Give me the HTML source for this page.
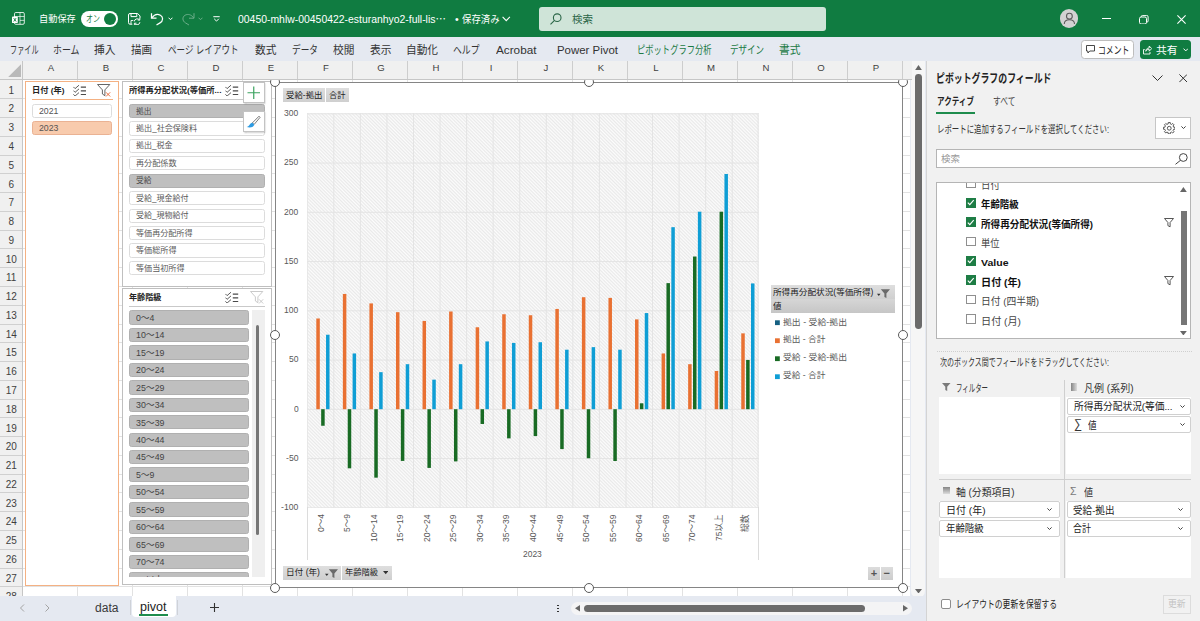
<!DOCTYPE html><html lang="ja"><head><meta charset="utf-8"><title>Excel</title><style>
*{box-sizing:border-box;margin:0;padding:0}
html,body{width:1200px;height:621px;overflow:hidden;background:#fff;font-family:"Liberation Sans", "Noto Sans CJK JP", sans-serif;font-size:12px;color:#222}
.a{position:absolute}
.t{position:absolute;white-space:nowrap;transform-origin:0 50%;display:block}
#title{position:absolute;left:0;top:0;width:1200px;height:38px;background:#107c41}
#tabs{position:absolute;left:0;top:37px;width:1200px;height:24px;background:#e5e9f1}
#colhdr{z-index:5;position:absolute;left:0;top:61px;width:912px;height:19px;background:#f0f0f0;border-bottom:1px solid #c6c6c6}
.cs{position:absolute;top:0;width:1px;height:18px;background:#cdcdcd}
#rowhdr{position:absolute;left:0;top:80px;width:23px;height:516px;background:#f0f0f0;border-right:1px solid #c6c6c6;overflow:hidden}
.rs{position:absolute;left:0;width:22px;height:1px;background:#d0d0d0}
#grid{position:absolute;left:23px;top:80px;width:889px;height:516px;overflow:hidden;background:#fff}
.vl{position:absolute;top:0;width:1px;height:516px;background:#e2e2e2}
.hl{position:absolute;left:0;height:1px;width:889px;background:#e2e2e2}
.slicer{position:absolute;background:#fff;border:1px solid #bfbfbf}
.si{position:absolute;border:1px solid #dcdcdc;border-radius:2.5px;background:#fff}
.si.sel{background:#bfbfbf;border-color:#b0b0b0}
.si.or{background:#f8cbad;border-color:#eab293}
#chart{position:absolute;left:274.5px;top:81.5px;width:628px;height:506.5px;background:#fff;border:1px solid #858585}
.hd{position:absolute;width:10px;height:10px;border:1.9px solid #5a5a5a;border-radius:50%;background:#fff}
.fb{position:absolute;background:linear-gradient(#dedede,#cfcfcf)}
.bar{position:absolute;width:3.5px}
#plot{position:absolute;left:307px;top:113px;width:451.5px;height:394.5px;background-color:#f3f3f3;background-image:repeating-linear-gradient(45deg,#fcfcfc 0,#e9e9e9 1.2px,#fcfcfc 2.4px);overflow:hidden}
.pg{position:absolute;background:#e2e2e2}
#panel{position:absolute;left:926px;top:61px;width:274px;height:560px;background:#f1f1f1;border-left:1px solid #d4d4d4}
.box{position:absolute;background:#fff}
.fld{position:absolute;height:17px;background:#fff;border:1px solid #d0d0d0;border-radius:2px}
.cb{position:absolute;width:9.5px;height:9.5px;border:1px solid #8f8f8f;background:#fff}
.cb.on{background:#1e7d45;border-color:#1e7d45}
#bottom{position:absolute;left:0;top:595.5px;width:926px;height:26px;background:#e5e9f1}
</style></head><body>
<div id="title"></div>
<svg class="a" style="left:12px;top:12px;" width="13.5" height="13.5" viewBox="0 0 13.5 13.5"><path d="M3.8 0.5h7.2a1.3 1.3 0 0 1 1.3 1.3v9.2a1.3 1.3 0 0 1-1.3 1.3h-7.2a1.3 1.3 0 0 1-1.3-1.3v-9.2a1.3 1.3 0 0 1 1.3-1.3z" fill="none" stroke="#fff" stroke-width="0.9" opacity=".92"/><path d="M8 0.5v11.8M2.5 4.5h9.8M8 8.4h4.3" stroke="#fff" stroke-width="0.8" fill="none" opacity=".85"/><rect x="0" y="4.5" width="5.8" height="6.6" rx="0.9" fill="#fff"/><path d="M1.7 6.1l2.4 3.4M4.1 6.1l-2.4 3.4" stroke="#107c41" stroke-width="0.9"/></svg>
<span class="t" style="left:38.5px;top:12.2px;font-size:9.5px;line-height:14px;color:#fff;transform:scaleX(0.968);">自動保存</span>
<div class="a" style="left:81px;top:10.5px;width:37px;height:16.5px;border-radius:8.5px;background:#fff"></div>
<span class="t" style="left:86.3px;top:11.9px;font-size:9.3px;line-height:14px;color:#107c41;transform:scaleX(0.752);">オン</span>
<div class="a" style="left:104px;top:13px;width:12px;height:12px;border-radius:50%;background:#107c41"></div>
<svg class="a" style="left:128px;top:12.5px;" width="13" height="12.5" viewBox="0 0 13 12.5"><path d="M4.3 11.2h-2.3a1.5 1.5 0 0 1-1.5-1.5v-7.7a1.5 1.5 0 0 1 1.5-1.5h7.6l2.4 2.4v2.3" fill="none" stroke="#fff" stroke-width="1"/><path d="M3 0.5v3.1h5.8v-3.1" fill="none" stroke="#fff" stroke-width="1"/><path d="M3 11.2v-3.7h2.3" fill="none" stroke="#fff" stroke-width="0.9"/><path d="M6.3 8.4a2.9 2.7 0 0 1 5.2-1.5M11.9 9.2a2.9 2.7 0 0 1-5.2 1.5" fill="none" stroke="#fff" stroke-width="1"/><path d="M11.8 5v2.1h-2.1M6.4 12.3v-2.1h2.1" fill="none" stroke="#fff" stroke-width="0.9"/></svg>
<svg class="a" style="left:150px;top:11.5px;" width="14.5" height="14.5" viewBox="0 0 14.5 14.5"><path d="M1.5 1.2v5h5" fill="none" stroke="#fff" stroke-width="1.25" stroke-linejoin="miter"/><path d="M1.8 5.9c2.3-3.3 5.8-4.3 8.6-2.7 3 1.7 2.9 5.8-.4 7.7l-3.5 2.1" fill="none" stroke="#fff" stroke-width="1.25"/></svg>
<svg class="a" style="left:168px;top:16.5px;" width="5" height="4" viewBox="0 0 5 4"><path d="M0.5 0.7l2 2 2-2" fill="none" stroke="#fff" stroke-width="1"/></svg>
<svg class="a" style="left:180.5px;top:11.5px;opacity:.38" width="14.5" height="14.5" viewBox="0 0 14.5 14.5"><g transform="translate(14.5 0) scale(-1 1)"><path d="M1.5 1.2v5h5" fill="none" stroke="#fff" stroke-width="1" stroke-linejoin="miter"/><path d="M1.8 5.9c2.3-3.3 5.8-4.3 8.6-2.7 3 1.7 2.9 5.8-.4 7.7l-3.5 2.1" fill="none" stroke="#fff" stroke-width="1"/></g></svg>
<svg class="a" style="left:198px;top:16.5px;opacity:.38" width="5" height="4" viewBox="0 0 5 4"><path d="M0.5 0.7l2 2 2-2" fill="none" stroke="#fff" stroke-width="1"/></svg>
<svg class="a" style="left:212.5px;top:15.5px;" width="7" height="6" viewBox="0 0 7 6"><path d="M0.3 0.7h6.4M1.2 2.8l2.3 2.3 2.3-2.3" fill="none" stroke="#fff" stroke-width="1"/></svg>
<span class="t" style="left:238px;top:11px;font-size:11px;line-height:16px;color:#fff;transform:scaleX(0.947);">00450-mhlw-00450422-esturanhyo2-full-lis⋯</span>
<span class="t" style="left:455px;top:11px;font-size:10.5px;line-height:16px;color:#fff;">•</span>
<span class="t" style="left:462px;top:11.5px;font-size:10px;line-height:15px;color:#fff;transform:scaleX(0.938);">保存済み</span>
<svg class="a" style="left:502px;top:16px;" width="8.5" height="6" viewBox="0 0 8.5 6"><path d="M0.6 0.8l3.65 3.8 3.65-3.8" fill="none" stroke="#fff" stroke-width="1.1"/></svg>
<div class="a" style="left:539px;top:7px;width:287px;height:23.5px;background:#cfe4d8;border-radius:3px"></div>
<svg class="a" style="left:549.5px;top:12.5px;" width="12" height="12" viewBox="0 0 12 12"><circle cx="7.2" cy="4.7" r="3.8" fill="none" stroke="#2a6546" stroke-width="1.1"/><path d="M4.5 7.4l-4 4" stroke="#2a6546" stroke-width="1.1"/></svg>
<span class="t" style="left:572px;top:11px;font-size:10.5px;line-height:16px;color:#2a6546;transform:scaleX(1);">検索</span>
<div class="a" style="left:1059.5px;top:9.3px;width:18.8px;height:18.8px;border-radius:50%;background:#d2d2d2"></div>
<svg class="a" style="left:1059.5px;top:9.3px;" width="18.8" height="18.8" viewBox="0 0 18.8 18.8"><circle cx="9.4" cy="7.2" r="2.9" fill="none" stroke="#5c5c5c" stroke-width="1.1"/><path d="M4.3 15c0-3.2 2.3-4.3 5.1-4.3s5.1 1.1 5.1 4.3" fill="none" stroke="#5c5c5c" stroke-width="1.1"/></svg>
<div class="a" style="left:1102px;top:18px;width:8.5px;height:1px;background:#fff"></div>
<svg class="a" style="left:1139px;top:14.5px;" width="9.5" height="9.5" viewBox="0 0 9.5 9.5"><rect x="0.5" y="2" width="7" height="7" rx="1.6" fill="none" stroke="#fff" stroke-width="1"/><path d="M2.3 2v-0.3a1.3 1.3 0 0 1 1.3-1.3h4a1.5 1.5 0 0 1 1.5 1.5v4a1.3 1.3 0 0 1-1.3 1.3h-0.3" fill="none" stroke="#fff" stroke-width="1"/></svg>
<svg class="a" style="left:1177px;top:14.7px;" width="9" height="9" viewBox="0 0 9 9"><path d="M0.4 0.4l8.2 8.2M8.6 0.4l-8.2 8.2" stroke="#fff" stroke-width="1.1"/></svg>
<div id="tabs"></div>
<span class="t" style="left:9.5px;top:41.8px;font-size:11px;line-height:16px;color:#333;transform:scaleX(0.648);">ファイル</span>
<span class="t" style="left:53px;top:41.8px;font-size:11px;line-height:16px;color:#333;transform:scaleX(0.811);">ホーム</span>
<span class="t" style="left:94px;top:41.8px;font-size:11px;line-height:16px;color:#333;transform:scaleX(0.977);">挿入</span>
<span class="t" style="left:131px;top:41.8px;font-size:11px;line-height:16px;color:#333;transform:scaleX(0.955);">描画</span>
<span class="t" style="left:168px;top:41.8px;font-size:11px;line-height:16px;color:#333;transform:scaleX(0.776);">ページ レイアウト</span>
<span class="t" style="left:255px;top:41.8px;font-size:11px;line-height:16px;color:#333;transform:scaleX(0.977);">数式</span>
<span class="t" style="left:292px;top:41.8px;font-size:11px;line-height:16px;color:#333;transform:scaleX(0.788);">データ</span>
<span class="t" style="left:333px;top:41.8px;font-size:11px;line-height:16px;color:#333;transform:scaleX(0.977);">校閲</span>
<span class="t" style="left:369.5px;top:41.8px;font-size:11px;line-height:16px;color:#333;transform:scaleX(0.977);">表示</span>
<span class="t" style="left:406px;top:41.8px;font-size:11px;line-height:16px;color:#333;transform:scaleX(0.97);">自動化</span>
<span class="t" style="left:453px;top:41.8px;font-size:11px;line-height:16px;color:#333;transform:scaleX(0.803);">ヘルプ</span>
<span class="t" style="left:496px;top:41.8px;font-size:11px;line-height:16px;color:#333;transform:scaleX(1.068);">Acrobat</span>
<span class="t" style="left:557px;top:41.8px;font-size:11px;line-height:16px;color:#333;transform:scaleX(1.039);">Power Pivot</span>
<span class="t" style="left:637px;top:41.8px;font-size:11px;line-height:16px;color:#1a7a43;transform:scaleX(0.753);">ピボットグラフ分析</span>
<span class="t" style="left:729.5px;top:41.8px;font-size:11px;line-height:16px;color:#1a7a43;transform:scaleX(0.773);">デザイン</span>
<span class="t" style="left:779px;top:41.8px;font-size:11px;line-height:16px;color:#1a7a43;transform:scaleX(0.977);">書式</span>
<div class="a" style="left:1081px;top:40px;width:53px;height:19px;border:1px solid #bdbdbd;border-radius:3.5px;background:#fff"></div>
<svg class="a" style="left:1085.5px;top:45.3px;" width="9" height="9" viewBox="0 0 9 9"><path d="M0.5 0.5h8v5.5h-4.7l-1.9 2v-2h-1.4z" fill="none" stroke="#333" stroke-width="0.9"/></svg>
<span class="t" style="left:1097.5px;top:41.8px;font-size:10.5px;line-height:16px;color:#222;transform:scaleX(0.75);">コメント</span>
<div class="a" style="left:1140px;top:40px;width:51px;height:19px;border-radius:3.5px;background:#107c41"></div>
<svg class="a" style="left:1143px;top:45px;" width="9" height="9.5" viewBox="0 0 9 9.5"><path d="M1.7 4.5h-1.2v4.5h6.5v-2" fill="none" stroke="#fff" stroke-width="0.9"/><path d="M2.8 6.3c0-2 1.3-3.3 3.4-3.3v-2l2.5 2.6-2.5 2.6v-1.9c-1.7 0-2.7.5-3.4 2z" fill="none" stroke="#fff" stroke-width="0.9" stroke-linejoin="round"/></svg>
<span class="t" style="left:1156px;top:41.8px;font-size:10.5px;line-height:16px;color:#fff;transform:scaleX(1.024);">共有</span>
<svg class="a" style="left:1182.5px;top:48.3px;" width="5.5" height="4" viewBox="0 0 5.5 4"><path d="M0.5 0.6l2.25 2.3 2.25-2.3" fill="none" stroke="#fff" stroke-width="1"/></svg>
<div id="grid">
<div class="vl" style="left:54px"></div>
<div class="vl" style="left:109px"></div>
<div class="vl" style="left:164px"></div>
<div class="vl" style="left:219px"></div>
<div class="vl" style="left:274px"></div>
<div class="vl" style="left:329px"></div>
<div class="vl" style="left:384px"></div>
<div class="vl" style="left:439px"></div>
<div class="vl" style="left:494px"></div>
<div class="vl" style="left:549px"></div>
<div class="vl" style="left:604px"></div>
<div class="vl" style="left:659px"></div>
<div class="vl" style="left:714px"></div>
<div class="vl" style="left:769px"></div>
<div class="vl" style="left:824px"></div>
<div class="vl" style="left:879px"></div>
<div class="hl" style="top:18.27px"></div>
<div class="hl" style="top:37.04px"></div>
<div class="hl" style="top:55.81px"></div>
<div class="hl" style="top:74.58px"></div>
<div class="hl" style="top:93.35px"></div>
<div class="hl" style="top:112.12px"></div>
<div class="hl" style="top:130.89px"></div>
<div class="hl" style="top:149.66px"></div>
<div class="hl" style="top:168.43px"></div>
<div class="hl" style="top:187.2px"></div>
<div class="hl" style="top:205.97px"></div>
<div class="hl" style="top:224.74px"></div>
<div class="hl" style="top:243.51px"></div>
<div class="hl" style="top:262.28px"></div>
<div class="hl" style="top:281.05px"></div>
<div class="hl" style="top:299.82px"></div>
<div class="hl" style="top:318.59px"></div>
<div class="hl" style="top:337.36px"></div>
<div class="hl" style="top:356.13px"></div>
<div class="hl" style="top:374.9px"></div>
<div class="hl" style="top:393.67px"></div>
<div class="hl" style="top:412.44px"></div>
<div class="hl" style="top:431.21px"></div>
<div class="hl" style="top:449.98px"></div>
<div class="hl" style="top:468.75px"></div>
<div class="hl" style="top:487.52px"></div>
<div class="hl" style="top:506.29px"></div>
</div>
<div id="colhdr">
<div class="cs" style="left:22px;height:19px;background:#c6c6c6"></div>
<div class="cs" style="left:77px"></div>
<div class="cs" style="left:132px"></div>
<div class="cs" style="left:187px"></div>
<div class="cs" style="left:242px"></div>
<div class="cs" style="left:297px"></div>
<div class="cs" style="left:352px"></div>
<div class="cs" style="left:407px"></div>
<div class="cs" style="left:462px"></div>
<div class="cs" style="left:517px"></div>
<div class="cs" style="left:572px"></div>
<div class="cs" style="left:627px"></div>
<div class="cs" style="left:682px"></div>
<div class="cs" style="left:737px"></div>
<div class="cs" style="left:792px"></div>
<div class="cs" style="left:847px"></div>
<div class="cs" style="left:902px"></div>
</div>
<svg class="a" style="left:7.5px;top:64.3px;z-index:6" width="13.2" height="13.2" viewBox="0 0 13.2 13.2"><path d="M13.2 0v13.2h-13.2z" fill="#b9b9b9"/></svg>
<span class="t" style="z-index:6;left:23.5px;top:61.3px;width:55px;text-align:center;font-size:9.6px;line-height:14px;color:#3f3f3f">A</span>
<span class="t" style="z-index:6;left:78.5px;top:61.3px;width:55px;text-align:center;font-size:9.6px;line-height:14px;color:#3f3f3f">B</span>
<span class="t" style="z-index:6;left:133.5px;top:61.3px;width:55px;text-align:center;font-size:9.6px;line-height:14px;color:#3f3f3f">C</span>
<span class="t" style="z-index:6;left:188.5px;top:61.3px;width:55px;text-align:center;font-size:9.6px;line-height:14px;color:#3f3f3f">D</span>
<span class="t" style="z-index:6;left:243.5px;top:61.3px;width:55px;text-align:center;font-size:9.6px;line-height:14px;color:#3f3f3f">E</span>
<span class="t" style="z-index:6;left:298.5px;top:61.3px;width:55px;text-align:center;font-size:9.6px;line-height:14px;color:#3f3f3f">F</span>
<span class="t" style="z-index:6;left:353.5px;top:61.3px;width:55px;text-align:center;font-size:9.6px;line-height:14px;color:#3f3f3f">G</span>
<span class="t" style="z-index:6;left:408.5px;top:61.3px;width:55px;text-align:center;font-size:9.6px;line-height:14px;color:#3f3f3f">H</span>
<span class="t" style="z-index:6;left:463.5px;top:61.3px;width:55px;text-align:center;font-size:9.6px;line-height:14px;color:#3f3f3f">I</span>
<span class="t" style="z-index:6;left:518.5px;top:61.3px;width:55px;text-align:center;font-size:9.6px;line-height:14px;color:#3f3f3f">J</span>
<span class="t" style="z-index:6;left:573.5px;top:61.3px;width:55px;text-align:center;font-size:9.6px;line-height:14px;color:#3f3f3f">K</span>
<span class="t" style="z-index:6;left:628.5px;top:61.3px;width:55px;text-align:center;font-size:9.6px;line-height:14px;color:#3f3f3f">L</span>
<span class="t" style="z-index:6;left:683.5px;top:61.3px;width:55px;text-align:center;font-size:9.6px;line-height:14px;color:#3f3f3f">M</span>
<span class="t" style="z-index:6;left:738.5px;top:61.3px;width:55px;text-align:center;font-size:9.6px;line-height:14px;color:#3f3f3f">N</span>
<span class="t" style="z-index:6;left:793.5px;top:61.3px;width:55px;text-align:center;font-size:9.6px;line-height:14px;color:#3f3f3f">O</span>
<span class="t" style="z-index:6;left:848.5px;top:61.3px;width:55px;text-align:center;font-size:9.6px;line-height:14px;color:#3f3f3f">P</span>
<div id="rowhdr">
<div class="rs" style="top:18.27px"></div>
<div class="rs" style="top:37.04px"></div>
<div class="rs" style="top:55.81px"></div>
<div class="rs" style="top:74.58px"></div>
<div class="rs" style="top:93.35px"></div>
<div class="rs" style="top:112.12px"></div>
<div class="rs" style="top:130.89px"></div>
<div class="rs" style="top:149.66px"></div>
<div class="rs" style="top:168.43px"></div>
<div class="rs" style="top:187.2px"></div>
<div class="rs" style="top:205.97px"></div>
<div class="rs" style="top:224.74px"></div>
<div class="rs" style="top:243.51px"></div>
<div class="rs" style="top:262.28px"></div>
<div class="rs" style="top:281.05px"></div>
<div class="rs" style="top:299.82px"></div>
<div class="rs" style="top:318.59px"></div>
<div class="rs" style="top:337.36px"></div>
<div class="rs" style="top:356.13px"></div>
<div class="rs" style="top:374.9px"></div>
<div class="rs" style="top:393.67px"></div>
<div class="rs" style="top:412.44px"></div>
<div class="rs" style="top:431.21px"></div>
<div class="rs" style="top:449.98px"></div>
<div class="rs" style="top:468.75px"></div>
<div class="rs" style="top:487.52px"></div>
<div class="rs" style="top:506.29px"></div>
<div class="rs" style="top:525.06px"></div>
<span class="t" style="left:0;top:3.7px;width:22.5px;text-align:center;font-size:10px;line-height:14px;color:#3f3f3f">1</span>
<span class="t" style="left:0;top:22.47px;width:22.5px;text-align:center;font-size:10px;line-height:14px;color:#3f3f3f">2</span>
<span class="t" style="left:0;top:41.24px;width:22.5px;text-align:center;font-size:10px;line-height:14px;color:#3f3f3f">3</span>
<span class="t" style="left:0;top:60.01px;width:22.5px;text-align:center;font-size:10px;line-height:14px;color:#3f3f3f">4</span>
<span class="t" style="left:0;top:78.78px;width:22.5px;text-align:center;font-size:10px;line-height:14px;color:#3f3f3f">5</span>
<span class="t" style="left:0;top:97.55px;width:22.5px;text-align:center;font-size:10px;line-height:14px;color:#3f3f3f">6</span>
<span class="t" style="left:0;top:116.32px;width:22.5px;text-align:center;font-size:10px;line-height:14px;color:#3f3f3f">7</span>
<span class="t" style="left:0;top:135.09px;width:22.5px;text-align:center;font-size:10px;line-height:14px;color:#3f3f3f">8</span>
<span class="t" style="left:0;top:153.86px;width:22.5px;text-align:center;font-size:10px;line-height:14px;color:#3f3f3f">9</span>
<span class="t" style="left:0;top:172.63px;width:22.5px;text-align:center;font-size:10px;line-height:14px;color:#3f3f3f">10</span>
<span class="t" style="left:0;top:191.4px;width:22.5px;text-align:center;font-size:10px;line-height:14px;color:#3f3f3f">11</span>
<span class="t" style="left:0;top:210.17px;width:22.5px;text-align:center;font-size:10px;line-height:14px;color:#3f3f3f">12</span>
<span class="t" style="left:0;top:228.94px;width:22.5px;text-align:center;font-size:10px;line-height:14px;color:#3f3f3f">13</span>
<span class="t" style="left:0;top:247.71px;width:22.5px;text-align:center;font-size:10px;line-height:14px;color:#3f3f3f">14</span>
<span class="t" style="left:0;top:266.48px;width:22.5px;text-align:center;font-size:10px;line-height:14px;color:#3f3f3f">15</span>
<span class="t" style="left:0;top:285.25px;width:22.5px;text-align:center;font-size:10px;line-height:14px;color:#3f3f3f">16</span>
<span class="t" style="left:0;top:304.02px;width:22.5px;text-align:center;font-size:10px;line-height:14px;color:#3f3f3f">17</span>
<span class="t" style="left:0;top:322.79px;width:22.5px;text-align:center;font-size:10px;line-height:14px;color:#3f3f3f">18</span>
<span class="t" style="left:0;top:341.56px;width:22.5px;text-align:center;font-size:10px;line-height:14px;color:#3f3f3f">19</span>
<span class="t" style="left:0;top:360.33px;width:22.5px;text-align:center;font-size:10px;line-height:14px;color:#3f3f3f">20</span>
<span class="t" style="left:0;top:379.1px;width:22.5px;text-align:center;font-size:10px;line-height:14px;color:#3f3f3f">21</span>
<span class="t" style="left:0;top:397.87px;width:22.5px;text-align:center;font-size:10px;line-height:14px;color:#3f3f3f">22</span>
<span class="t" style="left:0;top:416.64px;width:22.5px;text-align:center;font-size:10px;line-height:14px;color:#3f3f3f">23</span>
<span class="t" style="left:0;top:435.41px;width:22.5px;text-align:center;font-size:10px;line-height:14px;color:#3f3f3f">24</span>
<span class="t" style="left:0;top:454.18px;width:22.5px;text-align:center;font-size:10px;line-height:14px;color:#3f3f3f">25</span>
<span class="t" style="left:0;top:472.95px;width:22.5px;text-align:center;font-size:10px;line-height:14px;color:#3f3f3f">26</span>
<span class="t" style="left:0;top:491.72px;width:22.5px;text-align:center;font-size:10px;line-height:14px;color:#3f3f3f">27</span>
<span class="t" style="left:0;top:510.49px;width:22.5px;text-align:center;font-size:10px;line-height:14px;color:#3f3f3f">28</span>
</div>
<div class="slicer" style="left:24.5px;top:80.7px;width:94.5px;height:505.3px;border-color:#f4b183"></div>
<span class="t" style="left:32.4px;top:85.2px;font-size:8px;line-height:12px;color:#222;font-weight:bold;transform:scaleX(1.03);">日付 (年)</span>
<svg class="a" style="left:72.7px;top:84.6px;" width="13.5" height="11.5" viewBox="0 0 13.5 11.5"><path d="M7.8 2.1h5.4M7.8 5.8h5.4M7.8 9.5h5.4" stroke="#4a4a4a" stroke-width="1.2"/><path d="M0.4 1.9l1.7 1.7 3.9-3.4M0.4 5.6l1.7 1.7 3.9-3.4M0.4 9.3l1.7 1.7 3.9-3.4" fill="none" stroke="#4a4a4a" stroke-width="0.9"/></svg>
<svg class="a" style="left:97.2px;top:84px;" width="13.5" height="13" viewBox="0 0 13.5 13"><path d="M0.5 0.5h12.3l-4.9 5.4v5.8l-2.5-1.7v-4.1z" fill="none" stroke="#555" stroke-width="0.9" stroke-linejoin="round"/><path d="M9 8.3l4.2 4.2M13.2 8.3l-4.2 4.2" stroke="#e8602c" stroke-width="0.9"/></svg>
<div class="a" style="left:32px;top:98.5px;width:80.5px;height:1px;background:#f4b183"></div>
<div class="si" style="left:32.2px;top:103.5px;width:80.3px;height:14.3px"></div>
<span class="t" style="left:39px;top:103.7px;font-size:9px;line-height:14px;color:#555;transform:scaleX(0.973);">2021</span>
<div class="si or" style="left:32.2px;top:121px;width:80.3px;height:14.3px"></div>
<span class="t" style="left:39px;top:121.2px;font-size:9px;line-height:14px;color:#555;transform:scaleX(0.973);">2023</span>
<div class="slicer" style="left:121.5px;top:80.7px;width:150.5px;height:206px"></div>
<span class="t" style="left:129px;top:85.2px;font-size:8px;line-height:12px;color:#222;font-weight:bold;transform:scaleX(1.035);">所得再分配状況(等価所...</span>
<svg class="a" style="left:225.2px;top:84.6px;" width="13.5" height="11.5" viewBox="0 0 13.5 11.5"><path d="M7.8 2.1h5.4M7.8 5.8h5.4M7.8 9.5h5.4" stroke="#4a4a4a" stroke-width="1.2"/><path d="M0.4 1.9l1.7 1.7 3.9-3.4M0.4 5.6l1.7 1.7 3.9-3.4M0.4 9.3l1.7 1.7 3.9-3.4" fill="none" stroke="#4a4a4a" stroke-width="0.9"/></svg>
<div class="a" style="left:129px;top:98.5px;width:136px;height:1px;background:#c9c9c9"></div>
<div class="si sel" style="left:129px;top:103.8px;width:136px;height:14.3px"></div>
<span class="t" style="left:136px;top:105.5px;font-size:8.2px;line-height:12px;color:#4a4a4a;transform:scaleX(0.946);">拠出</span>
<div class="si" style="left:129px;top:121.25px;width:136px;height:14.3px"></div>
<span class="t" style="left:136px;top:122.95px;font-size:8.2px;line-height:12px;color:#5a5a5a;transform:scaleX(0.986);">拠出_社会保険料</span>
<div class="si" style="left:129px;top:138.7px;width:136px;height:14.3px"></div>
<span class="t" style="left:136px;top:140.4px;font-size:8.2px;line-height:12px;color:#5a5a5a;transform:scaleX(0.978);">拠出_税金</span>
<div class="si" style="left:129px;top:156.15px;width:136px;height:14.3px"></div>
<span class="t" style="left:136px;top:157.85px;font-size:8.2px;line-height:12px;color:#5a5a5a;transform:scaleX(0.989);">再分配係数</span>
<div class="si sel" style="left:129px;top:173.6px;width:136px;height:14.3px"></div>
<span class="t" style="left:136px;top:175.3px;font-size:8.2px;line-height:12px;color:#4a4a4a;transform:scaleX(0.946);">受給</span>
<div class="si" style="left:129px;top:191.05px;width:136px;height:14.3px"></div>
<span class="t" style="left:136px;top:192.75px;font-size:8.2px;line-height:12px;color:#5a5a5a;transform:scaleX(0.978);">受給_現金給付</span>
<div class="si" style="left:129px;top:208.5px;width:136px;height:14.3px"></div>
<span class="t" style="left:136px;top:210.2px;font-size:8.2px;line-height:12px;color:#5a5a5a;transform:scaleX(0.978);">受給_現物給付</span>
<div class="si" style="left:129px;top:225.95px;width:136px;height:14.3px"></div>
<span class="t" style="left:136px;top:227.65px;font-size:8.2px;line-height:12px;color:#5a5a5a;transform:scaleX(0.986);">等価再分配所得</span>
<div class="si" style="left:129px;top:243.4px;width:136px;height:14.3px"></div>
<span class="t" style="left:136px;top:245.1px;font-size:8.2px;line-height:12px;color:#5a5a5a;transform:scaleX(0.989);">等価総所得</span>
<div class="si" style="left:129px;top:260.85px;width:136px;height:14.3px"></div>
<span class="t" style="left:136px;top:262.55px;font-size:8.2px;line-height:12px;color:#5a5a5a;transform:scaleX(0.987);">等価当初所得</span>
<div class="slicer" style="left:121.5px;top:288px;width:150.5px;height:296.5px;overflow:hidden">
</div>
<span class="t" style="left:129px;top:291.9px;font-size:8px;line-height:12px;color:#222;font-weight:bold;transform:scaleX(1.009);">年齢階級</span>
<svg class="a" style="left:225.2px;top:291.6px;" width="13.5" height="11.5" viewBox="0 0 13.5 11.5"><path d="M7.8 2.1h5.4M7.8 5.8h5.4M7.8 9.5h5.4" stroke="#4a4a4a" stroke-width="1.2"/><path d="M0.4 1.9l1.7 1.7 3.9-3.4M0.4 5.6l1.7 1.7 3.9-3.4M0.4 9.3l1.7 1.7 3.9-3.4" fill="none" stroke="#4a4a4a" stroke-width="0.9"/></svg>
<svg class="a" style="left:250px;top:291px;" width="13.5" height="13" viewBox="0 0 13.5 13"><path d="M0.5 0.5h12.3l-4.9 5.4v5.8l-2.5-1.7v-4.1z" fill="none" stroke="#c4c4c4" stroke-width="0.9" stroke-linejoin="round"/><path d="M9 8.3l4.2 4.2M13.2 8.3l-4.2 4.2" stroke="#c4c4c4" stroke-width="0.9"/></svg>
<div class="a" style="left:129px;top:306px;width:136px;height:1px;background:#c9c9c9"></div>
<div class="a" style="left:251.5px;top:310px;width:13px;height:267px;background:#efefef"></div>
<div class="a" style="left:255.5px;top:325px;width:3.2px;height:209.5px;background:#767676;border-radius:1.5px"></div>
<div class="a" style="left:128px;top:309px;width:122px;height:268.2px;overflow:hidden">
<div class="si sel" style="left:1px;top:1.4px;width:119.5px;height:14.4px"></div>
<div class="si sel" style="left:1px;top:18.85px;width:119.5px;height:14.4px"></div>
<div class="si sel" style="left:1px;top:36.3px;width:119.5px;height:14.4px"></div>
<div class="si sel" style="left:1px;top:53.75px;width:119.5px;height:14.4px"></div>
<div class="si sel" style="left:1px;top:71.2px;width:119.5px;height:14.4px"></div>
<div class="si sel" style="left:1px;top:88.65px;width:119.5px;height:14.4px"></div>
<div class="si sel" style="left:1px;top:106.1px;width:119.5px;height:14.4px"></div>
<div class="si sel" style="left:1px;top:123.55px;width:119.5px;height:14.4px"></div>
<div class="si sel" style="left:1px;top:141px;width:119.5px;height:14.4px"></div>
<div class="si sel" style="left:1px;top:158.45px;width:119.5px;height:14.4px"></div>
<div class="si sel" style="left:1px;top:175.9px;width:119.5px;height:14.4px"></div>
<div class="si sel" style="left:1px;top:193.35px;width:119.5px;height:14.4px"></div>
<div class="si sel" style="left:1px;top:210.8px;width:119.5px;height:14.4px"></div>
<div class="si sel" style="left:1px;top:228.25px;width:119.5px;height:14.4px"></div>
<div class="si sel" style="left:1px;top:245.7px;width:119.5px;height:14.4px"></div>
<div class="si sel" style="left:1px;top:263.15px;width:119.5px;height:14.4px"></div>
</div>
<span class="t" style="left:136px;top:311.8px;font-size:8.8px;line-height:13px;color:#444;transform:scaleX(0.995);">0～4</span>
<span class="t" style="left:136px;top:329.25px;font-size:8.8px;line-height:13px;color:#444;transform:scaleX(1.004);">10～14</span>
<span class="t" style="left:136px;top:346.7px;font-size:8.8px;line-height:13px;color:#444;transform:scaleX(1.004);">15～19</span>
<span class="t" style="left:136px;top:364.15px;font-size:8.8px;line-height:13px;color:#444;transform:scaleX(1.004);">20～24</span>
<span class="t" style="left:136px;top:381.6px;font-size:8.8px;line-height:13px;color:#444;transform:scaleX(1.004);">25～29</span>
<span class="t" style="left:136px;top:399.05px;font-size:8.8px;line-height:13px;color:#444;transform:scaleX(1.004);">30～34</span>
<span class="t" style="left:136px;top:416.5px;font-size:8.8px;line-height:13px;color:#444;transform:scaleX(1.004);">35～39</span>
<span class="t" style="left:136px;top:433.95px;font-size:8.8px;line-height:13px;color:#444;transform:scaleX(1.004);">40～44</span>
<span class="t" style="left:136px;top:451.4px;font-size:8.8px;line-height:13px;color:#444;transform:scaleX(1.004);">45～49</span>
<span class="t" style="left:136px;top:468.85px;font-size:8.8px;line-height:13px;color:#444;transform:scaleX(0.995);">5～9</span>
<span class="t" style="left:136px;top:486.3px;font-size:8.8px;line-height:13px;color:#444;transform:scaleX(1.004);">50～54</span>
<span class="t" style="left:136px;top:503.75px;font-size:8.8px;line-height:13px;color:#444;transform:scaleX(1.004);">55～59</span>
<span class="t" style="left:136px;top:521.2px;font-size:8.8px;line-height:13px;color:#444;transform:scaleX(1.004);">60～64</span>
<span class="t" style="left:136px;top:538.65px;font-size:8.8px;line-height:13px;color:#444;transform:scaleX(1.004);">65～69</span>
<span class="t" style="left:136px;top:556.1px;font-size:8.8px;line-height:13px;color:#444;transform:scaleX(1.004);">70～74</span>
<div class="a" style="left:128px;top:570px;width:122px;height:7.2px;overflow:hidden">
<span class="t" style="left:8px;top:3.5px;font-size:8.8px;line-height:13px;color:#444">75以上</span>
</div>
<div class="a" style="left:243px;top:82px;width:21.5px;height:21px;border:1px solid #c3c3c3;background:#fff;box-shadow:0.5px 1px 1.5px rgba(0,0,0,.22)"></div>
<div class="a" style="left:243px;top:111px;width:21.5px;height:21px;border:1px solid #c3c3c3;background:#fff;box-shadow:0.5px 1px 1.5px rgba(0,0,0,.22)"></div>
<svg class="a" style="left:247px;top:85.7px;" width="13.5" height="13.5" viewBox="0 0 13.5 13.5"><path d="M6.75 0.5v12.5M0.5 6.75h12.5" stroke="#3ba35f" stroke-width="1.2"/></svg>
<svg class="a" style="left:245.5px;top:115px;" width="15" height="14" viewBox="0 0 15 14"><path d="M13 1.2l1.1 1.1-6 7.2-1.7-1.6z" fill="#fff" stroke="#6b6b6b" stroke-width="0.9" stroke-linejoin="round"/><path d="M6.3 7.7l1.9 1.8c-.3 2.4-3.5 3.9-7.6 2.6 2.7-.6 3-3.9 5.7-4.4z" fill="#2e9be2"/></svg>
<div id="chart"></div>
<div id="plot">
</div>
<span class="t" style="left:284.1px;top:107px;font-size:8.6px;line-height:13px;color:#595959;transform:scaleX(0.99);">300</span>
<span class="t" style="left:284.1px;top:156.25px;font-size:8.6px;line-height:13px;color:#595959;transform:scaleX(0.99);">250</span>
<span class="t" style="left:284.1px;top:205.5px;font-size:8.6px;line-height:13px;color:#595959;transform:scaleX(0.99);">200</span>
<span class="t" style="left:284.1px;top:254.75px;font-size:8.6px;line-height:13px;color:#595959;transform:scaleX(0.99);">150</span>
<span class="t" style="left:284.1px;top:304px;font-size:8.6px;line-height:13px;color:#595959;transform:scaleX(0.99);">100</span>
<span class="t" style="left:288.8px;top:353.25px;font-size:8.6px;line-height:13px;color:#595959;transform:scaleX(0.993);">50</span>
<span class="t" style="left:293.6px;top:402.5px;font-size:8.6px;line-height:13px;color:#595959;transform:scaleX(0.983);">0</span>
<span class="t" style="left:285.8px;top:451.75px;font-size:8.6px;line-height:13px;color:#595959;transform:scaleX(1.006);">-50</span>
<span class="t" style="left:281px;top:501px;font-size:8.6px;line-height:13px;color:#595959;transform:scaleX(1.006);">-100</span>
<svg class="a" style="left:307px;top:113px;" width="452" height="395" viewBox="0 0 452 395"><rect x="0" y="0.3" width="451.5" height="1" fill="#e4e4e4"/><rect x="0" y="49.55" width="451.5" height="1" fill="#e4e4e4"/><rect x="0" y="98.8" width="451.5" height="1" fill="#e4e4e4"/><rect x="0" y="148.05" width="451.5" height="1" fill="#e4e4e4"/><rect x="0" y="197.3" width="451.5" height="1" fill="#e4e4e4"/><rect x="0" y="246.55" width="451.5" height="1" fill="#e4e4e4"/><rect x="0" y="295.8" width="451.5" height="1" fill="#e4e4e4"/><rect x="0" y="345.05" width="451.5" height="1" fill="#e4e4e4"/><rect x="0" y="394.3" width="451.5" height="1" fill="#e4e4e4"/><rect x="-0.25" y="0" width="1" height="395" fill="#e4e4e4"/><rect x="26.31" y="0" width="1" height="395" fill="#e4e4e4"/><rect x="52.87" y="0" width="1" height="395" fill="#e4e4e4"/><rect x="79.43" y="0" width="1" height="395" fill="#e4e4e4"/><rect x="105.99" y="0" width="1" height="395" fill="#e4e4e4"/><rect x="132.55" y="0" width="1" height="395" fill="#e4e4e4"/><rect x="159.11" y="0" width="1" height="395" fill="#e4e4e4"/><rect x="185.67" y="0" width="1" height="395" fill="#e4e4e4"/><rect x="212.23" y="0" width="1" height="395" fill="#e4e4e4"/><rect x="238.79" y="0" width="1" height="395" fill="#e4e4e4"/><rect x="265.35" y="0" width="1" height="395" fill="#e4e4e4"/><rect x="291.91" y="0" width="1" height="395" fill="#e4e4e4"/><rect x="318.47" y="0" width="1" height="395" fill="#e4e4e4"/><rect x="345.03" y="0" width="1" height="395" fill="#e4e4e4"/><rect x="371.59" y="0" width="1" height="395" fill="#e4e4e4"/><rect x="398.15" y="0" width="1" height="395" fill="#e4e4e4"/><rect x="424.71" y="0" width="1" height="395" fill="#e4e4e4"/><rect x="450.6" y="0" width="1" height="395" fill="#e4e4e4"/><rect x="9.3" y="205.48" width="3.5" height="90.72" fill="#e97132"/><rect x="14.17" y="296.2" width="3.5" height="16.55" fill="#196b24"/><rect x="19.04" y="221.73" width="3.5" height="74.47" fill="#0f9ed5"/><rect x="35.86" y="180.95" width="3.5" height="115.25" fill="#e97132"/><rect x="40.73" y="296.2" width="3.5" height="59.1" fill="#196b24"/><rect x="45.6" y="240.45" width="3.5" height="55.75" fill="#0f9ed5"/><rect x="62.42" y="190.41" width="3.5" height="105.79" fill="#e97132"/><rect x="67.29" y="296.2" width="3.5" height="68.46" fill="#196b24"/><rect x="72.16" y="259.16" width="3.5" height="37.04" fill="#0f9ed5"/><rect x="88.98" y="199.18" width="3.5" height="97.02" fill="#e97132"/><rect x="93.85" y="296.2" width="3.5" height="51.71" fill="#196b24"/><rect x="98.72" y="251.19" width="3.5" height="45.01" fill="#0f9ed5"/><rect x="115.54" y="207.94" width="3.5" height="88.26" fill="#e97132"/><rect x="120.41" y="296.2" width="3.5" height="58.71" fill="#196b24"/><rect x="125.28" y="266.65" width="3.5" height="29.55" fill="#0f9ed5"/><rect x="142.1" y="198.49" width="3.5" height="97.71" fill="#e97132"/><rect x="146.97" y="296.2" width="3.5" height="52.2" fill="#196b24"/><rect x="151.84" y="251.19" width="3.5" height="45.01" fill="#0f9ed5"/><rect x="168.66" y="214.25" width="3.5" height="81.95" fill="#e97132"/><rect x="173.53" y="296.2" width="3.5" height="14.78" fill="#196b24"/><rect x="178.4" y="228.43" width="3.5" height="67.77" fill="#0f9ed5"/><rect x="195.22" y="201.25" width="3.5" height="94.95" fill="#e97132"/><rect x="200.09" y="296.2" width="3.5" height="29.16" fill="#196b24"/><rect x="204.96" y="229.91" width="3.5" height="66.29" fill="#0f9ed5"/><rect x="221.78" y="202.23" width="3.5" height="93.97" fill="#e97132"/><rect x="226.65" y="296.2" width="3.5" height="26.89" fill="#196b24"/><rect x="231.52" y="229.22" width="3.5" height="66.98" fill="#0f9ed5"/><rect x="248.34" y="195.93" width="3.5" height="100.27" fill="#e97132"/><rect x="253.21" y="296.2" width="3.5" height="39.89" fill="#196b24"/><rect x="258.08" y="236.71" width="3.5" height="59.49" fill="#0f9ed5"/><rect x="274.9" y="184.21" width="3.5" height="111.99" fill="#e97132"/><rect x="279.77" y="296.2" width="3.5" height="49.05" fill="#196b24"/><rect x="284.64" y="234.14" width="3.5" height="62.05" fill="#0f9ed5"/><rect x="301.46" y="184.89" width="3.5" height="111.3" fill="#e97132"/><rect x="306.33" y="296.2" width="3.5" height="51.81" fill="#196b24"/><rect x="311.2" y="236.71" width="3.5" height="59.49" fill="#0f9ed5"/><rect x="328.02" y="206.37" width="3.5" height="89.83" fill="#e97132"/><rect x="332.89" y="290.29" width="3.5" height="5.91" fill="#196b24"/><rect x="337.76" y="200.06" width="3.5" height="96.14" fill="#0f9ed5"/><rect x="354.58" y="240.45" width="3.5" height="55.75" fill="#e97132"/><rect x="359.45" y="170.12" width="3.5" height="126.08" fill="#196b24"/><rect x="364.32" y="114.17" width="3.5" height="182.03" fill="#0f9ed5"/><rect x="381.14" y="251.19" width="3.5" height="45.01" fill="#e97132"/><rect x="386.01" y="143.52" width="3.5" height="152.68" fill="#196b24"/><rect x="390.88" y="98.71" width="3.5" height="197.49" fill="#0f9ed5"/><rect x="407.7" y="257.98" width="3.5" height="38.22" fill="#e97132"/><rect x="412.57" y="98.71" width="3.5" height="197.49" fill="#196b24"/><rect x="417.44" y="60.98" width="3.5" height="235.22" fill="#0f9ed5"/><rect x="434.26" y="220.35" width="3.5" height="75.84" fill="#e97132"/><rect x="439.13" y="246.95" width="3.5" height="49.25" fill="#196b24"/><rect x="444" y="170.42" width="3.5" height="125.78" fill="#0f9ed5"/></svg>
<span class="t" style="left:314.53px;top:532px;font-size:8.8px;line-height:12px;color:#595959;transform-origin:0 0;transform:rotate(-90deg) scaleX(0.968)">0～4</span>
<span class="t" style="left:341.09px;top:532px;font-size:8.8px;line-height:12px;color:#595959;transform-origin:0 0;transform:rotate(-90deg) scaleX(0.968)">5～9</span>
<span class="t" style="left:367.65px;top:541.5px;font-size:8.8px;line-height:12px;color:#595959;transform-origin:0 0;transform:rotate(-90deg) scaleX(0.969)">10～14</span>
<span class="t" style="left:394.21px;top:541.5px;font-size:8.8px;line-height:12px;color:#595959;transform-origin:0 0;transform:rotate(-90deg) scaleX(0.969)">15～19</span>
<span class="t" style="left:420.77px;top:541.5px;font-size:8.8px;line-height:12px;color:#595959;transform-origin:0 0;transform:rotate(-90deg) scaleX(0.969)">20～24</span>
<span class="t" style="left:447.33px;top:541.5px;font-size:8.8px;line-height:12px;color:#595959;transform-origin:0 0;transform:rotate(-90deg) scaleX(0.969)">25～29</span>
<span class="t" style="left:473.89px;top:541.5px;font-size:8.8px;line-height:12px;color:#595959;transform-origin:0 0;transform:rotate(-90deg) scaleX(0.969)">30～34</span>
<span class="t" style="left:500.45px;top:541.5px;font-size:8.8px;line-height:12px;color:#595959;transform-origin:0 0;transform:rotate(-90deg) scaleX(0.969)">35～39</span>
<span class="t" style="left:527.01px;top:541.5px;font-size:8.8px;line-height:12px;color:#595959;transform-origin:0 0;transform:rotate(-90deg) scaleX(0.969)">40～44</span>
<span class="t" style="left:553.57px;top:541.5px;font-size:8.8px;line-height:12px;color:#595959;transform-origin:0 0;transform:rotate(-90deg) scaleX(0.969)">45～49</span>
<span class="t" style="left:580.13px;top:541.5px;font-size:8.8px;line-height:12px;color:#595959;transform-origin:0 0;transform:rotate(-90deg) scaleX(0.969)">50～54</span>
<span class="t" style="left:606.69px;top:541.5px;font-size:8.8px;line-height:12px;color:#595959;transform-origin:0 0;transform:rotate(-90deg) scaleX(0.969)">55～59</span>
<span class="t" style="left:633.25px;top:541.5px;font-size:8.8px;line-height:12px;color:#595959;transform-origin:0 0;transform:rotate(-90deg) scaleX(0.969)">60～64</span>
<span class="t" style="left:659.81px;top:541.5px;font-size:8.8px;line-height:12px;color:#595959;transform-origin:0 0;transform:rotate(-90deg) scaleX(0.969)">65～69</span>
<span class="t" style="left:686.37px;top:541.5px;font-size:8.8px;line-height:12px;color:#595959;transform-origin:0 0;transform:rotate(-90deg) scaleX(0.969)">70～74</span>
<span class="t" style="left:712.93px;top:540.5px;font-size:8.8px;line-height:12px;color:#595959;transform-origin:0 0;transform:rotate(-90deg) scaleX(0.967)">75以上</span>
<span class="t" style="left:739.49px;top:531.5px;font-size:8.8px;line-height:12px;color:#595959;transform-origin:0 0;transform:rotate(-90deg) scaleX(0.994)">総数</span>
<div class="a" style="left:307px;top:507px;width:1px;height:53px;background:#dcdcdc"></div>
<div class="a" style="left:757.5px;top:507px;width:1px;height:53px;background:#dcdcdc"></div>
<span class="t" style="left:522.5px;top:548.1px;font-size:8.5px;line-height:13px;color:#595959;transform:scaleX(0.994);">2023</span>
<div class="fb" style="left:282.5px;top:88px;width:42.5px;height:14px"></div>
<span class="t" style="left:286px;top:88.5px;font-size:8.5px;line-height:13px;color:#222;transform:scaleX(0.991);">受給-拠出</span>
<div class="fb" style="left:326px;top:88px;width:22.8px;height:14px"></div>
<span class="t" style="left:328.8px;top:88.5px;font-size:8.5px;line-height:13px;color:#222;transform:scaleX(0.97);">合計</span>
<div class="fb" style="left:283px;top:566px;width:58.3px;height:14px"></div>
<span class="t" style="left:286px;top:566.3px;font-size:8.5px;line-height:13px;color:#222;transform:scaleX(1.014);">日付 (年)</span>
<div class="fb" style="left:342.3px;top:566px;width:49.7px;height:14px"></div>
<span class="t" style="left:344.5px;top:566.3px;font-size:8.5px;line-height:13px;color:#222;transform:scaleX(0.97);">年齢階級</span>
<svg class="a" style="left:324.5px;top:568.5px;" width="13.5" height="9" viewBox="0 0 13.5 9"><path d="M0 4.8h3.6l-1.8 2.2z" fill="#333"/><path d="M3.8 0.3h9.2l-3.6 4.2v4.5l-2-0.9v-3.6z" fill="#6a6a6a"/></svg>
<svg class="a" style="left:382.5px;top:571.2px;" width="5.5" height="3.5" viewBox="0 0 5.5 3.5"><path d="M0 0h5.5l-2.75 3.3z" fill="#333"/></svg>
<div class="fb" style="left:770.5px;top:285px;width:124.5px;height:14px"></div>
<span class="t" style="left:773px;top:285.7px;font-size:8.5px;line-height:13px;color:#222;transform:scaleX(1.013);">所得再分配状況(等価所得)</span>
<svg class="a" style="left:877px;top:288.5px;" width="13.5" height="9" viewBox="0 0 13.5 9"><path d="M0 4.8h3.6l-1.8 2.2z" fill="#333"/><path d="M3.8 0.3h9.2l-3.6 4.2v4.5l-2-0.9v-3.6z" fill="#6a6a6a"/></svg>
<div class="fb" style="left:770.5px;top:299px;width:124.5px;height:13.7px;background:linear-gradient(#d6d6d6,#c6c6c6)"></div>
<span class="t" style="left:773px;top:299.5px;font-size:8.5px;line-height:13px;color:#222;transform:scaleX(0.998);">値</span>
<svg class="a" style="left:774px;top:319px;" width="7" height="8" viewBox="0 0 7 8"><rect x="1" y="1.3" width="4.8" height="4.8" fill="#156082"/></svg>
<span class="t" style="left:783px;top:315.5px;font-size:8.5px;line-height:13px;color:#595959;transform:scaleX(1.043);">拠出 - 受給-拠出</span>
<svg class="a" style="left:774px;top:336.85px;" width="7" height="8" viewBox="0 0 7 8"><rect x="1" y="1.3" width="4.8" height="4.8" fill="#e97132"/></svg>
<span class="t" style="left:783px;top:333.35px;font-size:8.5px;line-height:13px;color:#595959;transform:scaleX(1.023);">拠出 - 合計</span>
<svg class="a" style="left:774px;top:354.7px;" width="7" height="8" viewBox="0 0 7 8"><rect x="1" y="1.3" width="4.8" height="4.8" fill="#196b24"/></svg>
<span class="t" style="left:783px;top:351.2px;font-size:8.5px;line-height:13px;color:#595959;transform:scaleX(1.043);">受給 - 受給-拠出</span>
<svg class="a" style="left:774px;top:372.55px;" width="7" height="8" viewBox="0 0 7 8"><rect x="1" y="1.3" width="4.8" height="4.8" fill="#0f9ed5"/></svg>
<span class="t" style="left:783px;top:369.05px;font-size:8.5px;line-height:13px;color:#595959;transform:scaleX(1.023);">受給 - 合計</span>
<div class="a" style="left:868px;top:566.5px;width:12px;height:13px;background:linear-gradient(#dcdcdc,#cdcdcd)"></div>
<span class="t" style="left:870.8px;top:564.6px;font-size:11px;line-height:16px;color:#555;font-weight:bold;">+</span>
<div class="a" style="left:880.8px;top:566.5px;width:12px;height:13px;background:linear-gradient(#dcdcdc,#cdcdcd)"></div>
<span class="t" style="left:883.6px;top:564.6px;font-size:11px;line-height:16px;color:#555;font-weight:bold;">−</span>
<div class="hd" style="left:270.4px;top:77px"></div>
<div class="hd" style="left:583.8px;top:77px"></div>
<div class="hd" style="left:897.6px;top:77px"></div>
<div class="hd" style="left:270.4px;top:330px"></div>
<div class="hd" style="left:897.6px;top:330px"></div>
<div class="hd" style="left:270.4px;top:582.7px"></div>
<div class="hd" style="left:583.8px;top:582.7px"></div>
<div class="hd" style="left:897.6px;top:582.7px"></div>
<div class="a" style="left:910px;top:61px;width:16px;height:535px;background:#e5e9f1"></div>
<div class="a" style="left:910.5px;top:61px;width:14.5px;height:536.5px;background:#f6f6f6;border-radius:0 0 7px 7px"></div>
<svg class="a" style="left:915px;top:65.2px;" width="7" height="5.2" viewBox="0 0 7 5.2"><path d="M0 5.2l3.5-5.2 3.5 5.2z" fill="#666"/></svg>
<div class="a" style="left:915px;top:74.2px;width:6.8px;height:254.5px;background:#6b6b6b;border-radius:3.4px"></div>
<svg class="a" style="left:915.2px;top:588.5px;" width="7" height="4.5" viewBox="0 0 7 4.5"><path d="M0 0l3.5 4.5 3.5-4.5z" fill="#666"/></svg>
<div id="bottom"></div>
<svg class="a" style="left:20px;top:603.5px;" width="4.5" height="8" viewBox="0 0 4.5 8"><path d="M4 0.5l-3.5 3.5 3.5 3.5" fill="none" stroke="#a3a3a3" stroke-width="1"/></svg>
<svg class="a" style="left:45px;top:603.5px;" width="4.5" height="8" viewBox="0 0 4.5 8"><path d="M0.5 0.5l3.5 3.5-3.5 3.5" fill="none" stroke="#a3a3a3" stroke-width="1"/></svg>
<span class="t" style="left:94.5px;top:599.2px;font-size:12px;line-height:18px;color:#3a3a3a;transform:scaleX(1.006);">data</span>
<div class="a" style="left:132px;top:595.5px;width:43.5px;height:21.5px;background:#fff;border-radius:0 0 4px 4px"></div>
<span class="t" style="left:140px;top:597.6px;font-size:12px;line-height:18px;color:#222;transform:scaleX(1.045);">pivot</span>
<div class="a" style="left:139px;top:614px;width:28.5px;height:1.7px;background:#1e8c4d"></div>
<div class="a" style="left:129.5px;top:600px;width:1px;height:15px;background:#cfd2d8"></div>
<div class="a" style="left:176.5px;top:600px;width:1px;height:15px;background:#cfd2d8"></div>
<svg class="a" style="left:209.5px;top:603px;" width="9" height="9" viewBox="0 0 9 9"><path d="M4.5 0v9M0 4.5h9" stroke="#333" stroke-width="1.1"/></svg>
<div class="a" style="left:557px;top:604.8px;width:1.6px;height:1.6px;background:#333"></div>
<div class="a" style="left:557px;top:607.8px;width:1.6px;height:1.6px;background:#333"></div>
<div class="a" style="left:557px;top:610.8px;width:1.6px;height:1.6px;background:#333"></div>
<div class="a" style="left:571px;top:601.8px;width:341px;height:13px;background:#f4f4f5;border-radius:6.5px"></div>
<svg class="a" style="left:575px;top:605px;" width="5" height="6.5" viewBox="0 0 5 6.5"><path d="M5 0l-5 3.25 5 3.25z" fill="#666"/></svg>
<div class="a" style="left:584px;top:604.5px;width:281px;height:7.5px;background:#6b6b6b;border-radius:3.75px"></div>
<svg class="a" style="left:903px;top:605px;" width="5" height="6.5" viewBox="0 0 5 6.5"><path d="M0 0l5 3.25-5 3.25z" fill="#666"/></svg>
<div id="panel"></div>
<span class="t" style="left:935.8px;top:69.8px;font-size:12px;line-height:18px;color:#222;font-weight:bold;transform:scaleX(0.741);">ピボットグラフのフィールド</span>
<svg class="a" style="left:1152px;top:75px;" width="11" height="6.5" viewBox="0 0 11 6.5"><path d="M0.5 0.5l5 5 5-5" fill="none" stroke="#333" stroke-width="1"/></svg>
<svg class="a" style="left:1178.7px;top:74.3px;" width="8.5" height="8.5" viewBox="0 0 8.5 8.5"><path d="M0.4 0.4l7.7 7.7M8.1 0.4l-7.7 7.7" stroke="#333" stroke-width="1"/></svg>
<span class="t" style="left:937px;top:93px;font-size:10.5px;line-height:16px;color:#222;font-weight:bold;transform:scaleX(0.72);">アクティブ</span>
<div class="a" style="left:936px;top:112.3px;width:39px;height:1.8px;background:#1e8c4d"></div>
<span class="t" style="left:993px;top:93.5px;font-size:10px;line-height:15px;color:#444;transform:scaleX(0.778);">すべて</span>
<span class="t" style="left:937px;top:121px;font-size:10.5px;line-height:16px;color:#333;transform:scaleX(0.706);">レポートに追加するフィールドを選択してください:</span>
<div class="a" style="left:1155px;top:117px;width:36px;height:21.5px;border:1px solid #c6c6c6;background:#fff"></div>
<svg class="a" style="left:1162.5px;top:121.7px;" width="12.5" height="12.5" viewBox="0 0 12.5 12.5"><circle cx="6.25" cy="6.25" r="1.9" fill="none" stroke="#444" stroke-width="0.9"/><path d="M5.31 0.43L7.19 0.43L7.3 1.87L8.6 2.41L9.7 1.47L11.03 2.8L10.09 3.9L10.63 5.2L12.07 5.31L12.07 7.19L10.63 7.3L10.09 8.6L11.03 9.7L9.7 11.03L8.6 10.09L7.3 10.63L7.19 12.07L5.31 12.07L5.2 10.63L3.9 10.09L2.8 11.03L1.47 9.7L2.41 8.6L1.87 7.3L0.43 7.19L0.43 5.31L1.87 5.2L2.41 3.9L1.47 2.8L2.8 1.47L3.9 2.41L5.2 1.87z" fill="none" stroke="#444" stroke-width="0.9" stroke-linejoin="round"/></svg>
<svg class="a" style="left:1181.3px;top:126px;" width="5" height="3.5" viewBox="0 0 5 3.5"><path d="M0.4 0.4l2.1 2.1 2.1-2.1" fill="none" stroke="#444" stroke-width="1"/></svg>
<div class="a" style="left:936px;top:149.3px;width:255px;height:18.7px;border:1px solid #b5b5b5;background:#fff"></div>
<span class="t" style="left:941px;top:151.5px;font-size:9.5px;line-height:14px;color:#9a9a9a;transform:scaleX(0.999);">検索</span>
<svg class="a" style="left:1175px;top:153px;" width="13" height="11.5" viewBox="0 0 13 11.5"><circle cx="8.3" cy="4.5" r="3.9" fill="none" stroke="#444" stroke-width="1"/><path d="M5.5 7.3l-5 4" stroke="#444" stroke-width="1"/></svg>
<div class="a" style="left:936px;top:182px;width:255px;height:157px;border:1px solid #b5b5b5;background:#fff"></div>
<div class="a" style="left:937px;top:183px;width:230px;height:8px;overflow:hidden"><div class="cb" style="left:29.3px;top:-4.5px"></div><span class="t" style="left:44px;top:-4px;font-size:10.5px;line-height:12px;color:#444;transform:scaleX(.9)">日付</span></div>
<div class="cb on" style="left:966.3px;top:198px"></div>
<svg class="a" style="left:967.3px;top:199.2px;" width="7.5" height="7.5" viewBox="0 0 7.5 7.5"><path d="M0.8 3.6l2 2.1 3.9-4.5" fill="none" stroke="#fff" stroke-width="1.1"/></svg>
<span class="t" style="left:980.8px;top:197.4px;font-size:9.8px;line-height:15px;color:#111;font-weight:bold;transform:scaleX(0.957);">年齢階級</span>
<div class="cb on" style="left:966.3px;top:217.35px"></div>
<svg class="a" style="left:967.3px;top:218.55px;" width="7.5" height="7.5" viewBox="0 0 7.5 7.5"><path d="M0.8 3.6l2 2.1 3.9-4.5" fill="none" stroke="#fff" stroke-width="1.1"/></svg>
<span class="t" style="left:980.8px;top:216.75px;font-size:9.8px;line-height:15px;color:#111;font-weight:bold;transform:scaleX(0.98);">所得再分配状況(等価所得)</span>
<svg class="a" style="left:1164px;top:218.35px;" width="10" height="9.5" viewBox="0 0 10 9.5"><path d="M0.5 0.5h9l-3.4 4v4.3l-2.2-1.2v-3.1z" fill="none" stroke="#444" stroke-width="0.9" stroke-linejoin="round"/></svg>
<div class="cb" style="left:966.3px;top:236.7px"></div>
<span class="t" style="left:980.8px;top:236.1px;font-size:9.8px;line-height:15px;color:#444;transform:scaleX(0.944);">単位</span>
<div class="cb on" style="left:966.3px;top:256.05px"></div>
<svg class="a" style="left:967.3px;top:257.25px;" width="7.5" height="7.5" viewBox="0 0 7.5 7.5"><path d="M0.8 3.6l2 2.1 3.9-4.5" fill="none" stroke="#fff" stroke-width="1.1"/></svg>
<span class="t" style="left:980.8px;top:255.45px;font-size:9.8px;line-height:15px;color:#111;font-weight:bold;transform:scaleX(1.074);">Value</span>
<div class="cb on" style="left:966.3px;top:275.4px"></div>
<svg class="a" style="left:967.3px;top:276.6px;" width="7.5" height="7.5" viewBox="0 0 7.5 7.5"><path d="M0.8 3.6l2 2.1 3.9-4.5" fill="none" stroke="#fff" stroke-width="1.1"/></svg>
<span class="t" style="left:980.8px;top:274.8px;font-size:9.8px;line-height:15px;color:#111;font-weight:bold;transform:scaleX(1.035);">日付 (年)</span>
<svg class="a" style="left:1164px;top:276.4px;" width="10" height="9.5" viewBox="0 0 10 9.5"><path d="M0.5 0.5h9l-3.4 4v4.3l-2.2-1.2v-3.1z" fill="none" stroke="#444" stroke-width="0.9" stroke-linejoin="round"/></svg>
<div class="cb" style="left:966.3px;top:294.75px"></div>
<span class="t" style="left:980.8px;top:294.15px;font-size:9.8px;line-height:15px;color:#444;transform:scaleX(0.996);">日付 (四半期)</span>
<div class="cb" style="left:966.3px;top:314.1px"></div>
<span class="t" style="left:980.8px;top:313.5px;font-size:9.8px;line-height:15px;color:#444;transform:scaleX(1.035);">日付 (月)</span>
<svg class="a" style="left:1180px;top:186.5px;" width="6.8" height="5" viewBox="0 0 6.8 5"><path d="M0 5l3.4-5 3.4 5z" fill="#666"/></svg>
<div class="a" style="left:1180.5px;top:210.5px;width:6.2px;height:114.5px;background:#767676"></div>
<svg class="a" style="left:1180px;top:330.5px;" width="6.8" height="4.5" viewBox="0 0 6.8 4.5"><path d="M0 0l3.4 4.5 3.4-4.5z" fill="#666"/></svg>
<div class="a" style="left:937px;top:351px;width:255px;height:0;border-top:1px dotted #cfcfcf"></div>
<span class="t" style="left:940px;top:353.8px;font-size:10.5px;line-height:16px;color:#333;transform:scaleX(0.666);">次のボックス間でフィールドをドラッグしてください:</span>
<svg class="a" style="left:942px;top:383px;" width="8.5" height="8" viewBox="0 0 8.5 8"><path d="M0 0h8.5l-3.3 3.8v4.2l-1.9-1v-3.2z" fill="#7a7a7a"/></svg>
<span class="t" style="left:956.3px;top:380px;font-size:10.5px;line-height:16px;color:#333;transform:scaleX(0.612);">フィルター</span>
<div class="box" style="left:938.8px;top:396.8px;width:121.5px;height:77.7px"></div>
<div class="a" style="left:1070.6px;top:383px;width:6px;height:7.5px;background:linear-gradient(90deg,#858585,#dcdcdc)"></div>
<span class="t" style="left:1083.8px;top:380px;font-size:10.5px;line-height:16px;color:#333;transform:scaleX(0.953);">凡例 (系列)</span>
<div class="box" style="left:1066.3px;top:396.8px;width:124.5px;height:77.7px"></div>
<div class="a" style="left:1064px;top:380px;width:1px;height:198px;background:#cfcfcf"></div>
<div class="a" style="left:938.8px;top:479px;width:252px;height:1px;background:#cfcfcf"></div>
<div class="a" style="left:942.6px;top:487.3px;width:7.4px;height:6.5px;background:linear-gradient(#858585,#dcdcdc)"></div>
<span class="t" style="left:956.3px;top:483.5px;font-size:10.5px;line-height:16px;color:#333;transform:scaleX(0.937);">軸 (分類項目)</span>
<div class="box" style="left:938.8px;top:501px;width:121.5px;height:77px"></div>
<span class="t" style="left:1070px;top:483.3px;font-size:10.5px;line-height:16px;color:#7a7a7a;transform:scaleX(1);">Σ</span>
<span class="t" style="left:1083.8px;top:483.5px;font-size:10.5px;line-height:16px;color:#333;transform:scaleX(0.857);">値</span>
<div class="box" style="left:1066.3px;top:501px;width:124.5px;height:77px"></div>
<div class="fld" style="left:1067.3px;top:397.7px;width:123.5px"></div>
<span class="t" style="left:1073.8px;top:399.3px;font-size:9.8px;line-height:15px;color:#222;transform:scaleX(0.989);">所得再分配状況(等価...</span>
<svg class="a" style="left:1179.5px;top:404.5px;" width="5" height="3.5" viewBox="0 0 5 3.5"><path d="M0.4 0.4l2.1 2.1 2.1-2.1" fill="none" stroke="#444" stroke-width="1"/></svg>
<div class="fld" style="left:1067.3px;top:416.1px;width:123.5px"></div>
<span class="t" style="left:1074.3px;top:415.3px;font-size:12.5px;line-height:19px;color:#333;transform:scaleX(0.897);">∑</span>
<span class="t" style="left:1087.8px;top:417.7px;font-size:9.8px;line-height:15px;color:#222;transform:scaleX(0.868);">値</span>
<svg class="a" style="left:1179.5px;top:422.9px;" width="5" height="3.5" viewBox="0 0 5 3.5"><path d="M0.4 0.4l2.1 2.1 2.1-2.1" fill="none" stroke="#444" stroke-width="1"/></svg>
<div class="fld" style="left:939.3px;top:501.2px;width:120.3px"></div>
<span class="t" style="left:945.8px;top:502.8px;font-size:9.8px;line-height:15px;color:#222;transform:scaleX(1.022);">日付 (年)</span>
<svg class="a" style="left:1047.3px;top:508px;" width="5" height="3.5" viewBox="0 0 5 3.5"><path d="M0.4 0.4l2.1 2.1 2.1-2.1" fill="none" stroke="#444" stroke-width="1"/></svg>
<div class="fld" style="left:939.3px;top:519.8px;width:120.3px"></div>
<span class="t" style="left:945.8px;top:521.4px;font-size:9.8px;line-height:15px;color:#222;transform:scaleX(0.957);">年齢階級</span>
<svg class="a" style="left:1047.3px;top:526.6px;" width="5" height="3.5" viewBox="0 0 5 3.5"><path d="M0.4 0.4l2.1 2.1 2.1-2.1" fill="none" stroke="#444" stroke-width="1"/></svg>
<div class="fld" style="left:1066.8px;top:501.2px;width:124px"></div>
<span class="t" style="left:1073.3px;top:502.8px;font-size:9.8px;line-height:15px;color:#222;transform:scaleX(0.978);">受給-拠出</span>
<svg class="a" style="left:1178px;top:508px;" width="5" height="3.5" viewBox="0 0 5 3.5"><path d="M0.4 0.4l2.1 2.1 2.1-2.1" fill="none" stroke="#444" stroke-width="1"/></svg>
<div class="fld" style="left:1066.8px;top:519.8px;width:124px"></div>
<span class="t" style="left:1073.3px;top:521.4px;font-size:9.8px;line-height:15px;color:#222;transform:scaleX(0.919);">合計</span>
<svg class="a" style="left:1178px;top:526.6px;" width="5" height="3.5" viewBox="0 0 5 3.5"><path d="M0.4 0.4l2.1 2.1 2.1-2.1" fill="none" stroke="#444" stroke-width="1"/></svg>
<div class="a" style="left:941.3px;top:599.3px;width:9.7px;height:9.7px;border:1px solid #8c8c8c;border-radius:2px;background:#fff"></div>
<span class="t" style="left:956.3px;top:596px;font-size:10.5px;line-height:16px;color:#222;transform:scaleX(0.74);">レイアウトの更新を保留する</span>
<div class="a" style="left:1162.5px;top:594.6px;width:28px;height:19px;border:1px solid #dcdcdc;background:#f1f1f1"></div>
<span class="t" style="left:1167.5px;top:597px;font-size:9.5px;line-height:14px;color:#c2c2c2;transform:scaleX(0.92);">更新</span>
</body></html>
